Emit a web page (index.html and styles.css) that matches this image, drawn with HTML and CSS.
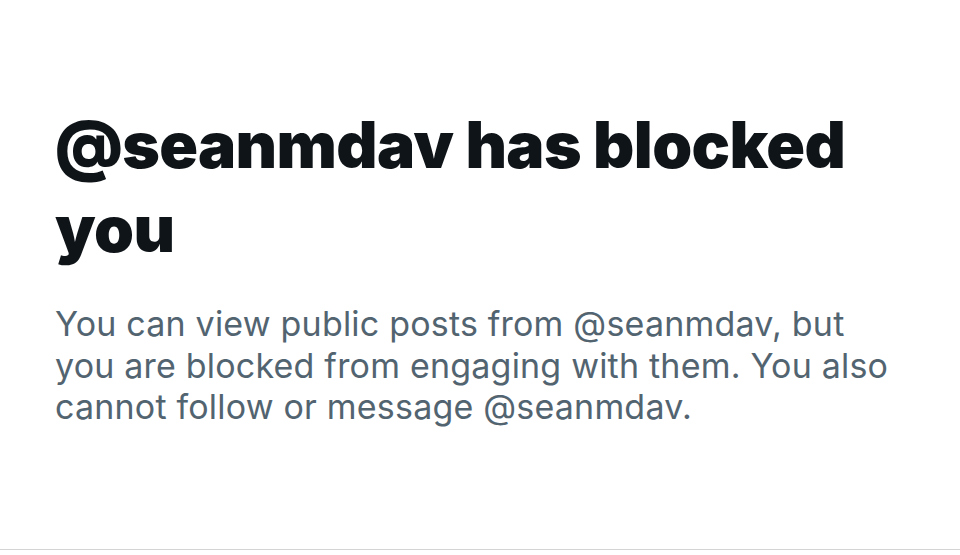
FILE: index.html
```html
<!DOCTYPE html>
<html lang="en">
<head>
  <meta charset="UTF-8">
  <title>Blocked</title>
  <link rel="stylesheet" href="styles.css">
</head>
<body>
  <main class="page">
    <section class="blocked">
      <h1 class="blocked-title">@seanmdav has blocked you</h1>
      <p class="blocked-text">You can view public posts from @seanmdav, but you are blocked from engaging with them. You also cannot follow or message @seanmdav.</p>
    </section>
  </main>
</body>
</html>
```

FILE: styles.css
```css
* {
  margin: 0;
  padding: 0;
  box-sizing: border-box;
}

body {
  background: #ffffff;
  font-family: Inter, "Noto Sans", sans-serif;
  width: 960px;
  height: 555px;
  overflow: hidden;
}

.page {
  height: 550px;
  border-bottom: 1px solid #d4d4d4;
}

.blocked {
  padding: 103px 60px 0 55px;
}

.blocked-title {
  color: #0f1419;
  font-size: 64px;
  font-weight: 900;
  line-height: 84px;
  letter-spacing: -0.6px;
  margin-bottom: 32px;
}

.blocked-text {
  color: #536471;
  font-size: 34px;
  font-weight: 400;
  line-height: 41.5px;
  letter-spacing: 0.2px;
}
```
